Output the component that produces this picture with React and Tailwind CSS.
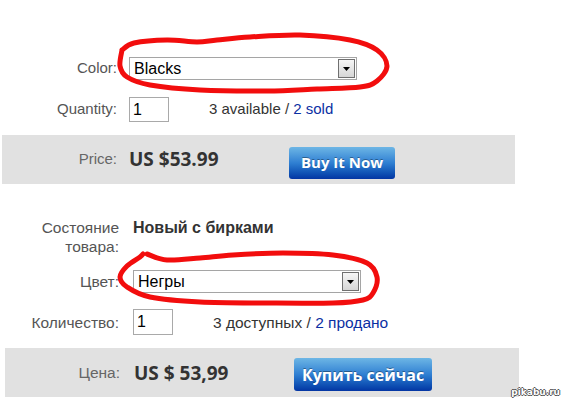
import React from "react"

// hand-drawn red loops, points taken off the screenshot
const loopTop = [
    [122, 50], [134, 43], [167, 40], [197, 42], [217, 40], [250, 37], [300, 35], [350, 40],
    [377, 50], [387, 66], [377, 81], [360, 87], [317, 89], [267, 91], [200, 90], [150, 85],
    [127, 77], [120, 66], [122, 50],
]
const loopBottom = [
    [147, 254], [167, 260], [200, 258], [233, 255], [283, 253], [333, 255], [367, 263],
    [377, 277], [373, 293], [363, 300], [333, 303], [267, 303], [200, 302], [150, 297],
    [127, 287], [120, 277], [127, 266], [140, 257], [143, 254],
]

const smoothPath = (pts) => {
    let d = `M${pts[0][0]},${pts[0][1]}`
    for (let i = 0; i < pts.length - 1; i++) {
        const p0 = pts[i - 1] || pts[i]
        const p1 = pts[i]
        const p2 = pts[i + 1]
        const p3 = pts[i + 2] || p2
        const c1x = p1[0] + (p2[0] - p0[0]) / 6
        const c1y = p1[1] + (p2[1] - p0[1]) / 6
        const c2x = p2[0] - (p3[0] - p1[0]) / 6
        const c2y = p2[1] - (p3[1] - p1[1]) / 6
        d += ` C${c1x},${c1y} ${c2x},${c2y} ${p2[0]},${p2[1]}`
    }
    return d
}

const SelectBox = ({ value, className }) => (
    <div className={`h-[23px] border border-[#a5a5a5] bg-white flex items-center justify-between pl-[4px] pr-[1px] ${className}`}>
        <span className="text-[16px] text-black leading-none">{value}</span>
        <span className="w-[17px] h-[19px] border border-[#707070] bg-linear-to-b from-[#f6f6f6] to-[#d6d6d6] flex items-center justify-center">
            <svg width="7" height="4" viewBox="0 0 7 4">
                <path d="M0 0h7L3.5 4z" fill="#000" />
            </svg>
        </span>
    </div>
)

const QtyInput = ({ className }) => (
    <div className={`border border-[#a9a9a9] bg-white flex items-center pl-[3px] text-[16px] text-black ${className}`}>1</div>
)

const BuyButton = ({ children, className }) => (
    <div className={`rounded-[3px] bg-linear-to-b from-[#6db6e5] via-[#2f7fd2] to-[#0535a3] flex items-center justify-center text-white font-bold font-['Open_Sans',sans-serif] [text-shadow:0_-1px_0_rgba(0,0,0,0.35)] ${className}`}>
        {children}
    </div>
)

export default function App() {
    return (
        <div className="relative w-[562px] h-[400px] overflow-hidden bg-white font-['Liberation_Sans',Arial,sans-serif]">
            {/* English block */}
            <div className="pt-[57px]">
                <div className="flex items-center">
                    <div className="w-[117px] text-right text-[15px] text-[#555]">Color:</div>
                    <SelectBox value="Blacks" className="ml-3 w-[228px]" />
                </div>
                <div className="flex items-center mt-[17px]">
                    <div className="w-[117px] text-right text-[15px] text-[#555]">Quantity:</div>
                    <QtyInput className="ml-3 w-[40px] h-[25px]" />
                    <div className="ml-[40px] text-[15px] text-[#333]">
                        3 available / <span className="text-[#0b2fa3]">2 sold</span>
                    </div>
                </div>
                <div className="mt-[13px] ml-[2px] w-[513px] h-[49px] bg-[#e1e1e1] flex items-center">
                    <div className="w-[115px] text-right text-[15px] text-[#666]">Price:</div>
                    <div className="ml-3 w-[160px] font-['Open_Sans',sans-serif] font-bold text-[19px] text-[#333]">US $53.99</div>
                    <BuyButton className="w-[106px] h-[32px] mt-[6px] text-[15px]">Buy It Now</BuyButton>
                </div>
            </div>

            {/* Russian block */}
            <div className="mt-[34px]">
                <div className="flex items-start">
                    <div className="w-[119px] text-right text-[15.5px] leading-[19px] text-[#555]">
                        Состояние<br />товара:
                    </div>
                    <div className="ml-[14px] text-[16px] leading-[19px] font-bold text-[#333]">Новый с бирками</div>
                </div>
                <div className="flex items-center mt-[14px]">
                    <div className="w-[119px] text-right text-[15.5px] text-[#555]">Цвет:</div>
                    <SelectBox value="Негры" className="ml-[14px] w-[228px]" />
                </div>
                <div className="flex items-center mt-[16px]">
                    <div className="w-[119px] text-right text-[15.5px] text-[#555]">Количество:</div>
                    <QtyInput className="ml-[14px] w-[40px] h-[26px]" />
                    <div className="ml-[40px] text-[15.5px] text-[#333]">
                        3 доступных / <span className="text-[#0b2fa3]">2 продано</span>
                    </div>
                </div>
                <div className="mt-[13px] ml-[5px] w-[514px] h-[49px] bg-[#e1e1e1] flex items-center">
                    <div className="w-[115px] text-right text-[15.5px] text-[#666]">Цена:</div>
                    <div className="ml-[14px] w-[160px] font-['Open_Sans',sans-serif] font-bold text-[19px] text-[#333]">US $ 53,99</div>
                    <BuyButton className="w-[138px] h-[33px] mt-[4px] text-[16px]">Купить сейчас</BuyButton>
                </div>
            </div>

            {/* red marker loops */}
            <svg className="absolute inset-0 pointer-events-none" width="562" height="400">
                <path d={smoothPath(loopTop)} fill="none" stroke="#f20d0d" strokeWidth="5" strokeLinecap="round" strokeLinejoin="round" />
                <path d={smoothPath(loopBottom)} fill="none" stroke="#f20d0d" strokeWidth="5" strokeLinecap="round" strokeLinejoin="round" />
            </svg>

            {/* watermark */}
            <div className="absolute right-[2px] bottom-[3px] text-[9px] font-bold leading-none text-white font-['DejaVu_Sans',sans-serif] [text-shadow:1px_0_0_#555,-1px_0_0_#555,0_1px_0_#555,0_-1px_0_#555]">
                pikabu.ru
            </div>
        </div>
    )
}
